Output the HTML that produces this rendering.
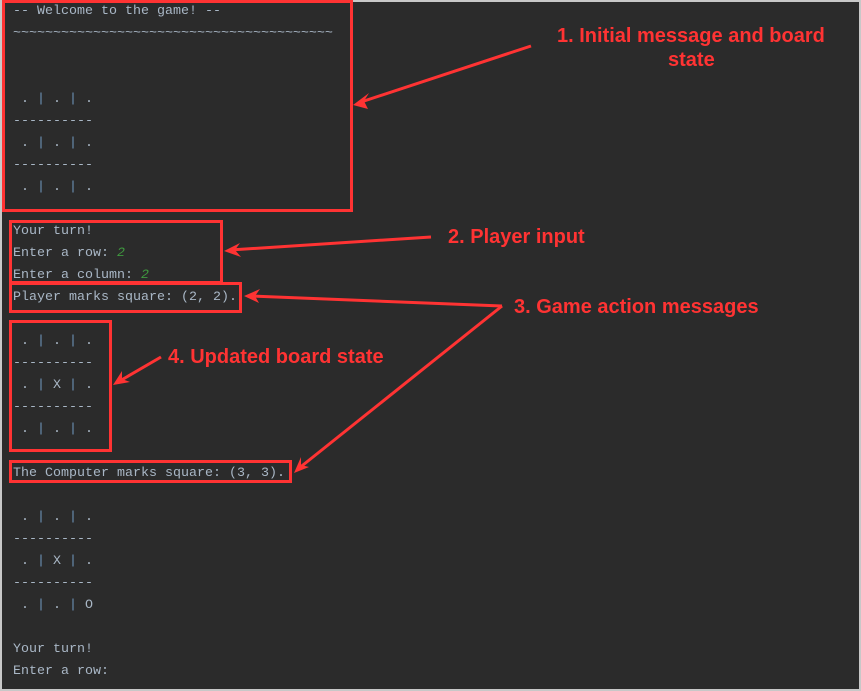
<!DOCTYPE html>
<html><head><meta charset="utf-8"><style>
html,body{margin:0;padding:0}
body{width:861px;height:691px;background:#2b2b2b;position:relative;overflow:hidden}
#frame{position:absolute;left:0;top:0;width:857px;height:687px;border:2px solid #c8c8c8}
.l{position:absolute;left:13px;font-family:"Liberation Mono",monospace;font-size:13.33px;color:#a9b7c6;white-space:pre;line-height:22px;height:22px}
.p{color:#6d93b8}
.g{color:#3f9a3f;font-style:italic}
.d{position:absolute;left:13px;width:88px;height:0;border-top:1px dashed #a9b7c6}
.t{position:absolute;font-family:"Liberation Sans",Arial,sans-serif;font-weight:bold;font-size:20px;color:#ff3333;white-space:nowrap;line-height:24px}
svg{position:absolute;left:0;top:0}
</style></head><body>
<div id="frame"></div>
<div class="l" style="top:1px">-- Welcome to the game! --</div>
<div class="l" style="top:23px">~~~~~~~~~~~~~~~~~~~~~~~~~~~~~~~~~~~~~~~~</div>
<div class="l" style="top:89px"> . <span class="p">|</span> . <span class="p">|</span> .</div>
<div class="l" style="top:111px">----------</div>
<div class="l" style="top:133px"> . <span class="p">|</span> . <span class="p">|</span> .</div>
<div class="l" style="top:155px">----------</div>
<div class="l" style="top:177px"> . <span class="p">|</span> . <span class="p">|</span> .</div>
<div class="l" style="top:221px">Your turn!</div>
<div class="l" style="top:243px">Enter a row: <span class="g">2</span></div>
<div class="l" style="top:265px">Enter a column: <span class="g">2</span></div>
<div class="l" style="top:287px">Player marks square: (2, 2).</div>
<div class="l" style="top:331px"> . <span class="p">|</span> . <span class="p">|</span> .</div>
<div class="l" style="top:353px">----------</div>
<div class="l" style="top:375px"> . <span class="p">|</span> X <span class="p">|</span> .</div>
<div class="l" style="top:397px">----------</div>
<div class="l" style="top:419px"> . <span class="p">|</span> . <span class="p">|</span> .</div>
<div class="l" style="top:463px">The Computer marks square: (3, 3).</div>
<div class="l" style="top:507px"> . <span class="p">|</span> . <span class="p">|</span> .</div>
<div class="l" style="top:529px">----------</div>
<div class="l" style="top:551px"> . <span class="p">|</span> X <span class="p">|</span> .</div>
<div class="l" style="top:573px">----------</div>
<div class="l" style="top:595px"> . <span class="p">|</span> . <span class="p">|</span> O</div>
<div class="l" style="top:639px">Your turn!</div>
<div class="l" style="top:661px">Enter a row:</div>

<svg width="861" height="691" viewBox="0 0 861 691">
<g fill="none" stroke="#ff3333" stroke-width="3">
<rect x="3.5" y="1.5" width="348" height="209"/>
<rect x="10.5" y="221.5" width="211" height="61"/>
<rect x="10.5" y="283.5" width="230" height="28"/>
<rect x="10.5" y="321.5" width="100" height="129"/>
<rect x="10.5" y="461.5" width="280" height="20"/>
<line x1="531" y1="46" x2="358" y2="103"/>
<line x1="431" y1="237" x2="230" y2="250"/>
<line x1="502" y1="306" x2="250" y2="296"/>
<line x1="502" y1="306" x2="298" y2="469"/>
<line x1="161" y1="357" x2="118" y2="382"/>
</g>
<g fill="#ff3333">
<polygon points="353,105 369,93 364,101 368,109"/>
<polygon points="224,251 240,243 235,250 241,257"/>
<polygon points="244,296 260,289 255,296 259,303"/>
<polygon points="294,473 301,457 301,465 309,467"/>
<polygon points="113,385 122,371 122,379 130,382"/>
</g>
</svg>
<div class="t" style="left:557px;top:24px">1. Initial message and board</div>
<div class="t" style="left:668px;top:48px">state</div>
<div class="t" style="left:448px;top:225px">2. Player input</div>
<div class="t" style="left:514px;top:295px">3. Game action messages</div>
<div class="t" style="left:168px;top:345px">4. Updated board state</div>
</body></html>
